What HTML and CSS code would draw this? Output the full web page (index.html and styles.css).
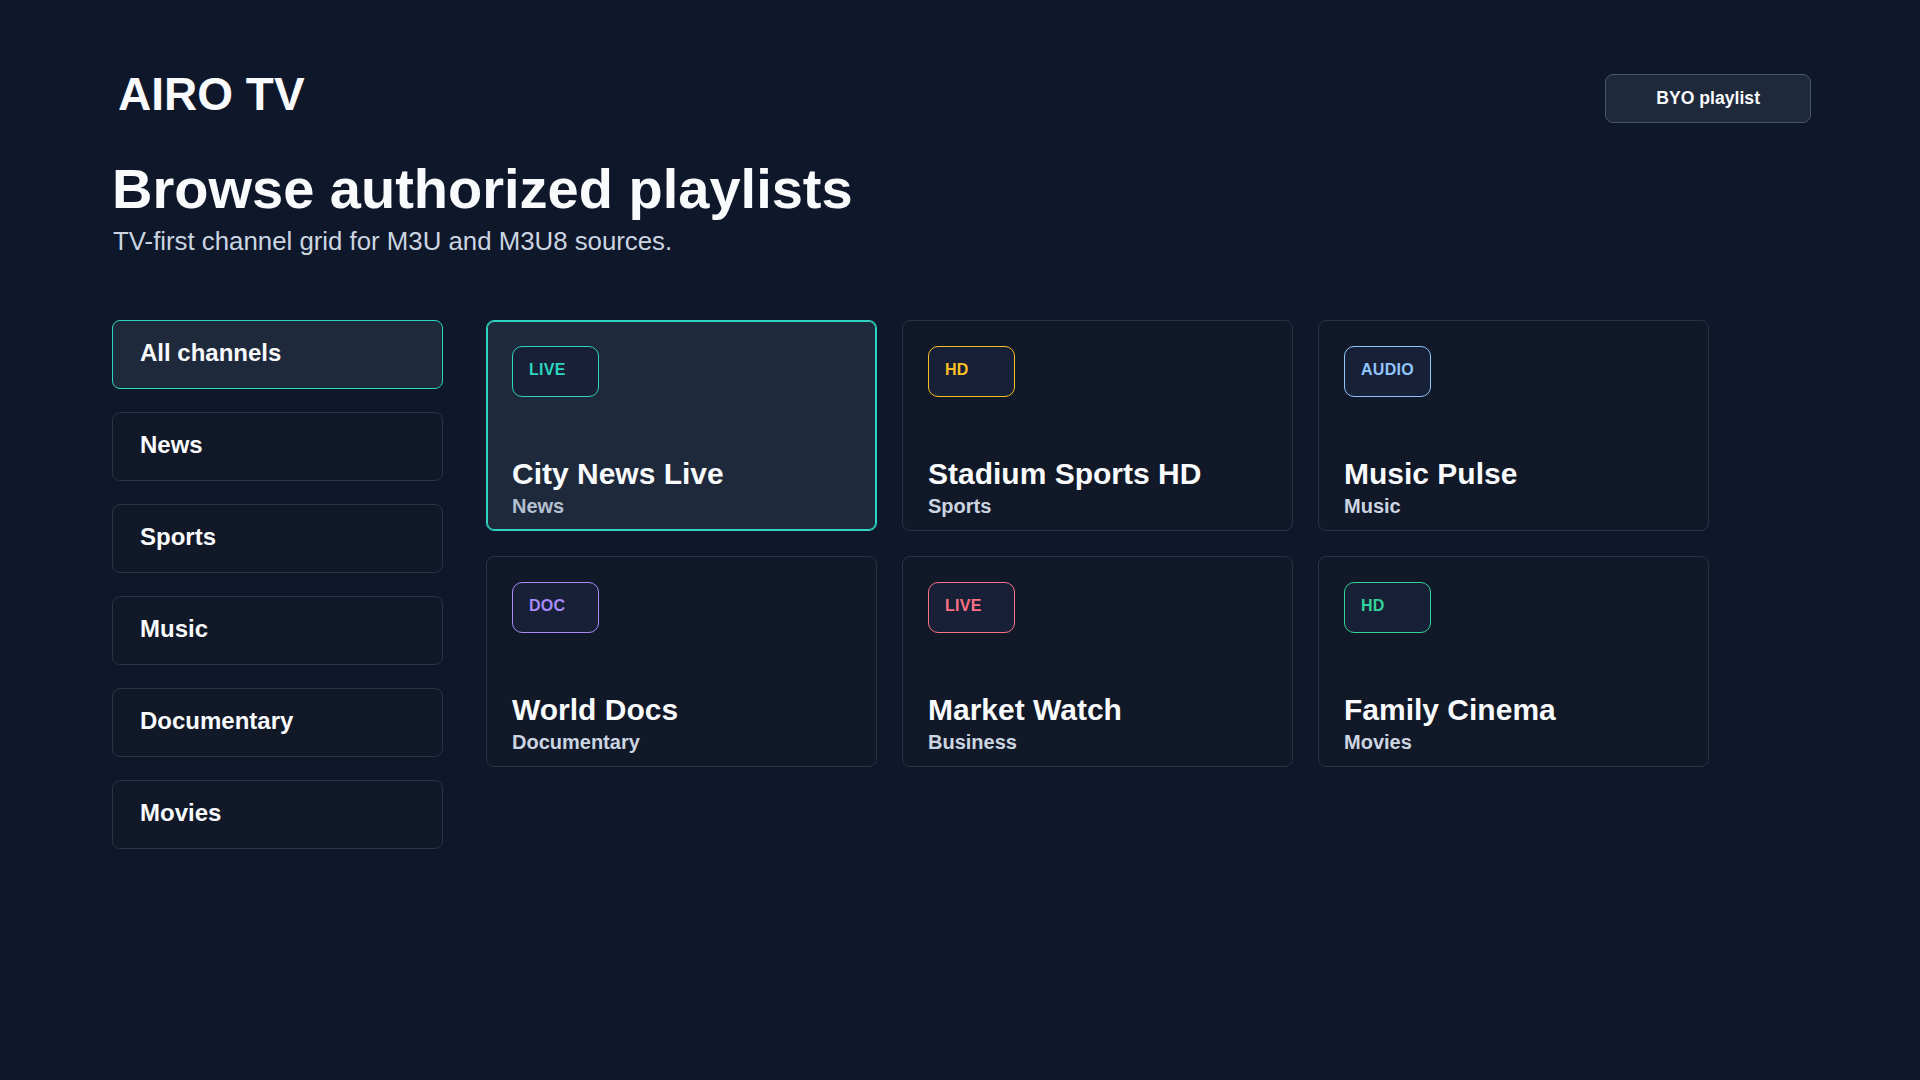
FILE: index.html
```html
<!DOCTYPE html>
<html>
<head>
  <title>AIRO TV</title>
  <link rel="stylesheet" href="styles.css">
</head>
<body>
  <div class="page">
    <header class="top-bar">
      <h1 class="logo">AIRO TV</h1>
      <button class="byo-button">BYO playlist</button>
    </header>

    <h2 class="page-title">Browse authorized playlists</h2>
    <p class="page-subtitle">TV-first channel grid for M3U and M3U8 sources.</p>

    <div class="browser">
      <nav class="category-list">
        <div class="category active">All channels</div>
        <div class="category">News</div>
        <div class="category">Sports</div>
        <div class="category">Music</div>
        <div class="category">Documentary</div>
        <div class="category">Movies</div>
      </nav>

      <div class="channel-grid">
        <div class="channel-card active">
          <span class="badge badge-live">LIVE</span>
          <div class="channel-info">
            <div class="channel-name">City News Live</div>
            <div class="channel-group">News</div>
          </div>
        </div>
        <div class="channel-card">
          <span class="badge badge-hd">HD</span>
          <div class="channel-info">
            <div class="channel-name">Stadium Sports HD</div>
            <div class="channel-group">Sports</div>
          </div>
        </div>
        <div class="channel-card">
          <span class="badge badge-audio">AUDIO</span>
          <div class="channel-info">
            <div class="channel-name">Music Pulse</div>
            <div class="channel-group">Music</div>
          </div>
        </div>
        <div class="channel-card">
          <span class="badge badge-doc">DOC</span>
          <div class="channel-info">
            <div class="channel-name">World Docs</div>
            <div class="channel-group">Documentary</div>
          </div>
        </div>
        <div class="channel-card">
          <span class="badge badge-alert">LIVE</span>
          <div class="channel-info">
            <div class="channel-name">Market Watch</div>
            <div class="channel-group">Business</div>
          </div>
        </div>
        <div class="channel-card">
          <span class="badge badge-green">HD</span>
          <div class="channel-info">
            <div class="channel-name">Family Cinema</div>
            <div class="channel-group">Movies</div>
          </div>
        </div>
      </div>
    </div>
  </div>
</body>
</html>
```

FILE: styles.css
```css
body {
  margin: 0;
  background-color: #0f172a;
  color: #f8fafc;
  font-family: "Liberation Sans", Arial, sans-serif;
}

.page {
  padding: 67px 109px 0 112px;
  min-height: 1013px;
}

.top-bar {
  display: flex;
  justify-content: space-between;
  align-items: flex-start;
}

.logo {
  margin: 0 0 0 6px;
  font-size: 46px;
  line-height: 55px;
  font-weight: bold;
}

.byo-button {
  margin-top: 7px;
  height: 49px;
  padding: 0 50px 1px;
  background-color: #1e293b;
  color: #f8fafc;
  border: 1px solid #475569;
  border-radius: 8px;
  font-family: inherit;
  font-size: 17.6px;
  font-weight: bold;
  cursor: pointer;
}

.page-title {
  margin: 32px 0 0;
  font-size: 56px;
  line-height: 1.2;
  font-weight: bold;
}

.page-subtitle {
  margin: 4px 0 0 1px;
  font-size: 25.8px;
  line-height: 1.2;
  color: #cbd5e1;
}

.browser {
  display: flex;
  gap: 43px;
  margin-top: 63px;
  align-items: flex-start;
}

.category-list {
  display: flex;
  flex-direction: column;
  gap: 23px;
  width: 331px;
}

.category {
  box-sizing: border-box;
  height: 69px;
  display: flex;
  align-items: center;
  padding: 0 27px 3px;
  background-color: #111827;
  border: 1px solid #273449;
  border-radius: 8px;
  font-size: 24px;
  font-weight: bold;
}

.category.active {
  background-color: #1e293b;
  border-color: #2dd4bf;
}

.channel-grid {
  display: grid;
  grid-template-columns: repeat(3, 391px);
  grid-auto-rows: 211px;
  gap: 25px;
}

.channel-card {
  box-sizing: border-box;
  display: flex;
  flex-direction: column;
  align-items: flex-start;
  padding: 25px 25px 12px;
  background-color: #111827;
  border: 1px solid #273449;
  border-radius: 8px;
}

.channel-card.active {
  background-color: #1e293b;
  border-color: #2dd4bf;
  box-shadow: inset 0 0 0 1px #2dd4bf;
}

.badge {
  box-sizing: border-box;
  min-width: 87px;
  height: 51px;
  display: flex;
  align-items: center;
  padding: 0 16px 3px;
  background-color: #172036;
  border: 1px solid;
  border-radius: 10px;
  font-size: 16px;
  font-weight: bold;
  letter-spacing: 0.3px;
}

.badge-live { color: #2dd4bf; border-color: #2dd4bf; }
.badge-hd { color: #fbbf24; border-color: #fbbf24; }
.badge-audio { color: #93c5fd; border-color: #93c5fd; }
.badge-doc { color: #a78bfa; border-color: #a78bfa; }
.badge-alert { color: #fb7185; border-color: #fb7185; }
.badge-green { color: #34d399; border-color: #34d399; }

.channel-info {
  margin-top: auto;
}

.channel-name {
  font-size: 30px;
  line-height: 1.2;
  font-weight: bold;
}

.channel-group {
  margin-top: 2px;
  font-size: 20px;
  line-height: 1.2;
  font-weight: bold;
  color: #cbd5e1;
}

.channel-card.active .channel-group {
  color: #b4c0d0;
}
```
